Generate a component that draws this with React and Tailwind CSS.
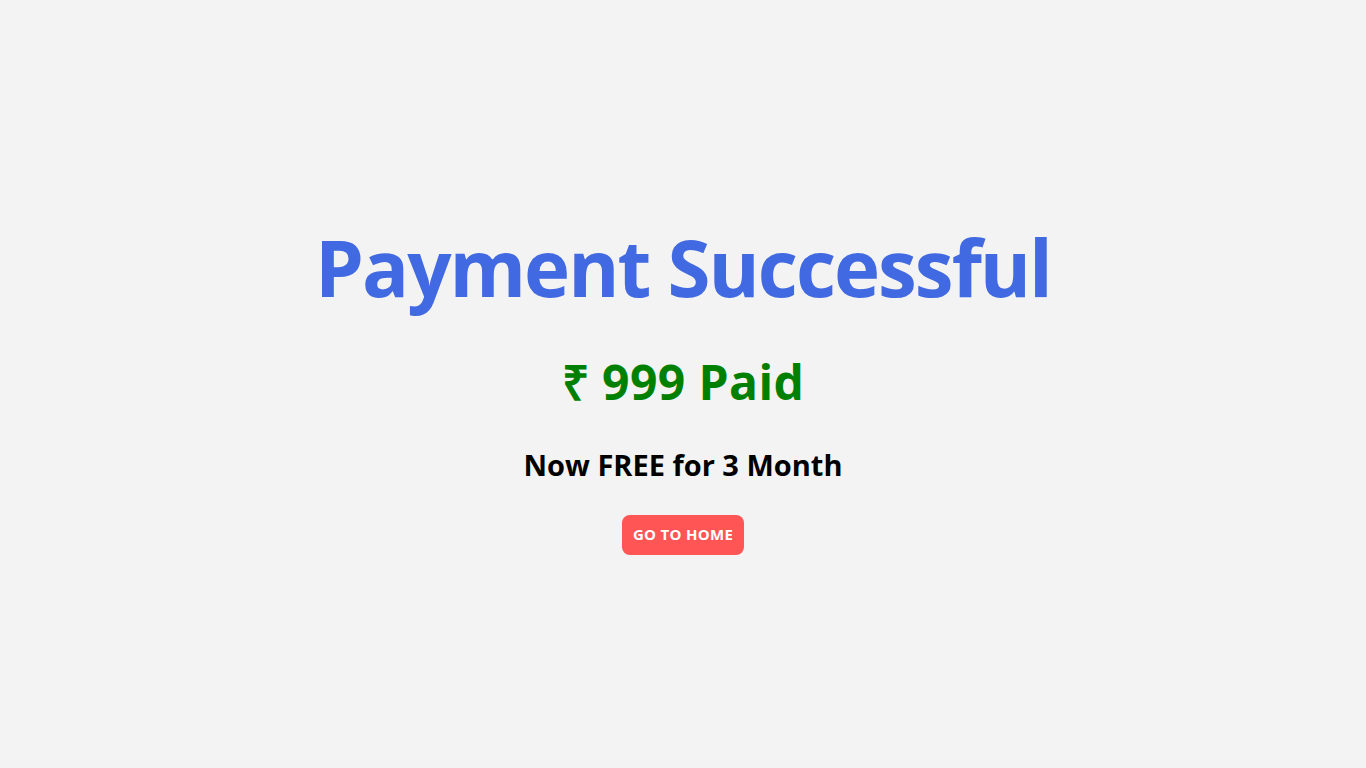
import React from 'react';

function App() {
    return (
        <div className="min-h-screen bg-[#f3f3f3] flex flex-col items-center justify-center font-['Open_Sans',sans-serif]">
            <h1 className="text-[78px] leading-[106px] font-bold text-[#4169e1] tracking-[-2px]">Payment Successful</h1>
            <h2 className="mt-[30px] text-[48px] leading-[64px] font-bold text-[#008000] tracking-[0.4px]">₹ 999 Paid</h2>
            <h3 className="mt-[32px] text-[29px] leading-[38px] font-bold text-black">Now FREE for 3 Month</h3>
            <button className="mt-[31px] h-[40px] px-[11px] rounded-[8px] bg-[#ff5555] text-white text-[15px] tracking-[0.3px] font-bold uppercase">
                Go to Home
            </button>
        </div>
    );
}

export default App;
